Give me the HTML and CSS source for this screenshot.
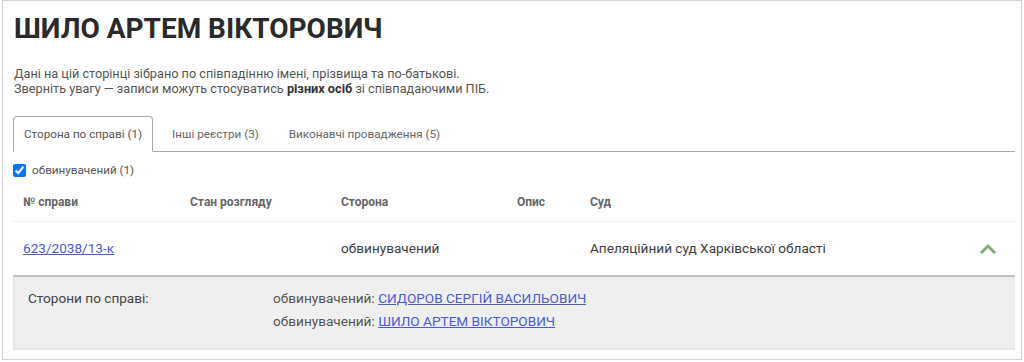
FILE: index.html
```html
<!DOCTYPE html>
<html lang="uk">
  <head>
    <meta charset="UTF-8" />
    <meta name="viewport" content="width=device-width, initial-scale=1.0" />
    <title>ШИЛО АРТЕМ ВІКТОРОВИЧ</title>
    <link rel="stylesheet" href="styles.css">
  </head>
  <body>
    <div class="page">
      <h1>ШИЛО АРТЕМ ВІКТОРОВИЧ</h1>
      <p class="note">
        Дані на цій сторінці зібрано по співпадінню імені, прізвища та по-батькові.<br />
        Зверніть увагу — записи можуть стосуватись <b>різних осіб</b> зі співпадаючими ПІБ.
      </p>

      <!-- Вкладки -->
      <ul class="tabs">
        <li class="tab active">Сторона по справі (1)</li>
        <li class="tab">Інші реєстри (3)</li>
        <li class="tab">Виконавчі провадження (5)</li>
      </ul>

      <label class="filter">
        <input type="checkbox" checked />
        обвинувачений (1)
      </label>

      <table class="cases">
        <thead>
          <tr>
            <th class="col-num">№ справи</th>
            <th class="col-state">Стан розгляду</th>
            <th class="col-side">Сторона</th>
            <th class="col-desc">Опис</th>
            <th class="col-court">Суд</th>
            <th class="col-toggle"></th>
          </tr>
        </thead>
        <tbody>
          <tr class="case-row">
            <td><a href="#">623/2038/13-к</a></td>
            <td></td>
            <td>обвинувачений</td>
            <td></td>
            <td>Апеляційний суд Харківської області</td>
            <td class="toggle">
              <svg width="18" height="12" viewBox="0 0 18 12">
                <polyline points="2,10 9,3 16,10" fill="none" stroke="#86ad78" stroke-width="3" />
              </svg>
            </td>
          </tr>
          <tr class="details">
            <td colspan="6">
              <div class="details-inner">
                <div class="details-label">Сторони по справі:</div>
                <div class="details-list">
                  <div>обвинувачений: <a href="#">СИДОРОВ СЕРГІЙ ВАСИЛЬОВИЧ</a></div>
                  <div>обвинувачений: <a href="#">ШИЛО АРТЕМ ВІКТОРОВИЧ</a></div>
                </div>
              </div>
            </td>
          </tr>
        </tbody>
      </table>
    </div>
  </body>
</html>
```

FILE: styles.css
```css
/* Base */
body {
  font-family: Roboto, "Liberation Sans", sans-serif;
  color: #333;
  margin: 0;
  background: #fff;
}

/* Main frame */
.page {
  margin: 0 2px 2px 2px;
  padding: 0 6px 9px 10px;
  border: 1px solid #d4d4d4;
}

h1 {
  margin: 11px 0 0 1px;
  font-size: 28px;
  line-height: 34px;
  font-weight: 700;
  color: #2a2a2a;
}

.note {
  margin: 20px 0 20px 1px;
  font-size: 12.7px;
  line-height: 15px;
  color: #555;
}

.note b {
  color: #333;
}

/* Tabs */
.tabs {
  display: flex;
  list-style: none;
  margin: 0;
  padding: 0;
  border-bottom: 1px solid #aaa;
}

.tab {
  padding: 10px 10px 9px;
  margin-right: 8px;
  margin-bottom: -1px;
  font-size: 11.7px;
  line-height: 15px;
  color: #666;
  border: 1px solid transparent;
  border-radius: 4px 4px 0 0;
}

.tab.active {
  color: #555;
  border-color: #aaa;
  border-bottom-color: #fff;
  background: #fff;
}

/* Filter */
.filter {
  display: flex;
  align-items: center;
  margin: 12px 0 4px 0;
  font-size: 11.7px;
  line-height: 13px;
  color: #555;
}

.filter input {
  width: 13px;
  height: 13px;
  margin: 0 6px 0 0;
}

/* Table */
.cases {
  width: 100%;
  border-collapse: collapse;
  table-layout: fixed;
  font-size: 13.6px;
}

.cases th {
  text-align: left;
  font-size: 12px;
  font-weight: 700;
  color: #666;
  padding: 13px 10px 11px;
  line-height: 16px;
  border-bottom: 1px solid #eee;
}

.col-num { width: 147px; }
.col-state { width: 131px; }
.col-side { width: 156px; }
.col-desc { width: 53px; }
.col-court { width: 340px; }

.case-row td {
  padding: 18px 10px 19px;
  line-height: 16px;
  color: #3d3d3d;
}

.case-row .toggle {
  text-align: right;
  padding: 0 18px 2px 0;
  vertical-align: middle;
}

.toggle svg {
  display: inline-block;
  vertical-align: middle;
}

a {
  color: #4b5bd4;
}

/* Expanded row */
.details td {
  padding: 0;
  background: #efefef;
  border-top: 2px solid #c2c2c2;
  box-shadow: inset 1px 0 2px #e2e2e2, inset 0 -1px 2px #e2e2e2;
}

.details-inner {
  display: flex;
  padding: 10px 15px 17px;
  line-height: 23px;
  color: #444;
}

.details-label {
  width: 245px;
}

.details-list {
  color: #555;
}
```
